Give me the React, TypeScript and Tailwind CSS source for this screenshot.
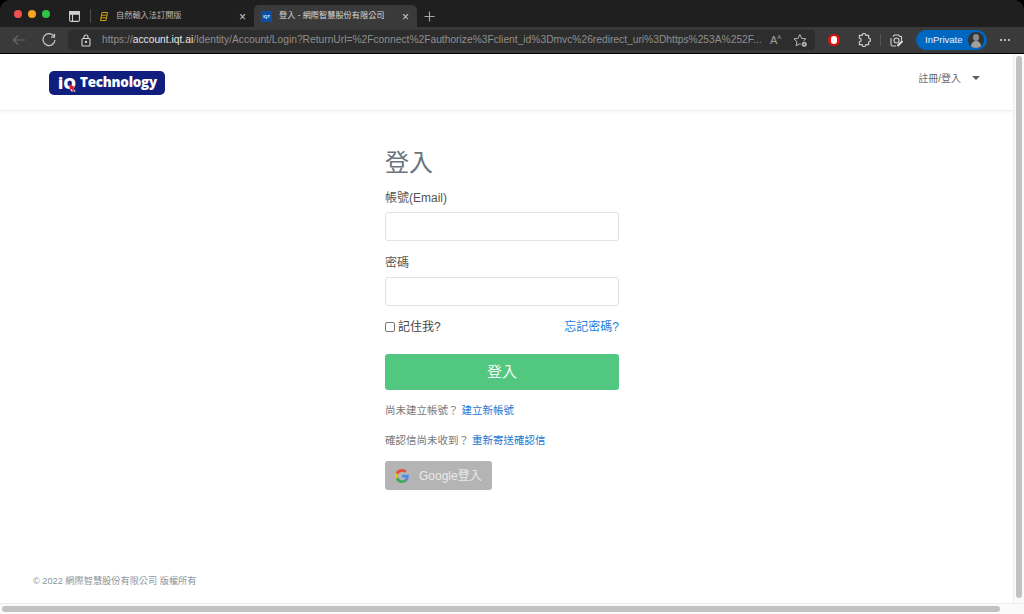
import React from "react";

const cjk = { fontFamily: '"Liberation Sans","Noto Sans CJK TC",sans-serif' };

function GoogleIcon() {
  return (
    <svg width="14" height="14" viewBox="0 0 48 48" className="shrink-0 opacity-90">
      <path fill="#EA4335" d="M24 9.500c3.500 0 6.700 1.200 9.200 3.600l6.900-6.900C35.900 2.400 30.500 0 24 0 14.600 0 6.500 5.400 2.600 13.200l8 6.200C12.500 13.700 17.800 9.500 24 9.500z" />
      <path fill="#4285F4" d="M47 24.500c0-1.600-.1-3.100-.4-4.500H24v9h12.900c-.6 3-2.200 5.500-4.800 7.200l7.700 6C44.300 38.500 47 32.100 47 24.500z" />
      <path fill="#FBBC05" d="M10.600 28.600c-.5-1.400-.8-3-.8-4.600s.3-3.200.8-4.600l-8-6.200C.9 16.500 0 20.100 0 24s.9 7.500 2.600 10.800l8-6.200z" />
      <path fill="#34A853" d="M24 48c6.500 0 11.900-2.100 15.800-5.800l-7.700-6c-2.100 1.400-4.900 2.300-8.100 2.300-6.200 0-11.500-4.200-13.400-9.900l-8 6.200C6.500 42.600 14.600 48 24 48z" />
    </svg>
  );
}

function Toolbar() {
  return (
    <div className="flex h-[26px] items-center bg-[#3a3a3a] pl-[12px] pr-[13px]" style={cjk}>
      <svg width="14" height="14" viewBox="0 0 14 14" fill="none" stroke="#686868" strokeWidth="1.200" className="mr-[16px] shrink-0">
        <path d="M13 7H1.500M6 2.500 1.500 7 6 11.500" />
      </svg>
      <svg width="14" height="14" viewBox="0 0 14 14" fill="none" stroke="#c8c8c8" strokeWidth="1.200" className="mr-[12px] shrink-0">
        <path d="M12 3.200A6 6 0 1 0 13 7" />
        <path d="M12.500.8v3.400H9" />
      </svg>
      <div className="flex h-[20px] w-[747px] shrink-0 items-center rounded-[4px] bg-[#2d2d2d] pl-[12px] pr-[8px]">
        <svg width="12" height="13" viewBox="0 0 12 13" fill="none" stroke="#d4d4d4" strokeWidth="1.100" className="mr-[10px] shrink-0">
          <rect x="2" y="4.500" width="8" height="7.500" rx="1" />
          <path d="M4 4.500V3a2 2 0 0 1 4 0v1.500" />
          <circle cx="6" cy="8" r=".6" fill="#d4d4d4" />
        </svg>
        <div className="w-[668px] shrink-0 whitespace-nowrap text-[10.250px] text-[#8f8f8f]">
          https://<span className="text-[#e6e6e6]">account.iqt.ai</span>/Identity/Account/Login?ReturnUrl=%2Fconnect%2Fauthorize%3Fclient_id%3Dmvc%26redirect_uri%3Dhttps%253A%252F...
        </div>
        <div className="flex items-start text-[#a0a0a0]">
          <span className="text-[11px] leading-[12px]">A</span>
          <span className="text-[6px] leading-[7px]">A</span>
        </div>
        <svg width="15" height="15" viewBox="0 0 24 24" fill="none" stroke="#b8b8b8" strokeWidth="1.600" strokeLinejoin="round" className="ml-[12px] shrink-0">
          <path d="M11 2.500 13.900 8.600 20.500 9.400 15.700 13.900 17 20.400 11 17.200 5 20.400 6.300 13.900 1.500 9.400 8.100 8.600z" />
          <circle cx="18" cy="18" r="5.500" fill="#2d2d2d" stroke="none" />
          <circle cx="18" cy="18" r="4" fill="#b8b8b8" stroke="none" />
          <circle cx="18" cy="18" r="1.300" fill="#2d2d2d" stroke="none" />
        </svg>
      </div>
      <div className="ml-[13px] flex h-[12px] w-[12px] shrink-0 items-center justify-center rounded-full bg-[#e01010]">
        <div className="h-[8px] w-[6px] rounded-[3px] bg-white" />
      </div>
      <svg width="14" height="14" viewBox="0 0 15 15" fill="none" stroke="#d0d0d0" strokeWidth="1.200" className="ml-[17px] shrink-0">
        <path d="M5.500 2.500a2 2 0 0 1 4 0h3v3a2 2 0 0 1 0 4v3h-3a2 2 0 0 1-4 0h-3v-3a2 2 0 0 0 0-4v-3z" />
      </svg>
      <div className="ml-[9px] h-[12px] w-px shrink-0 bg-[#555555]" />
      <svg width="15" height="15" viewBox="0 0 15 15" fill="none" stroke="#d0d0d0" strokeWidth="1.100" className="ml-[8px] shrink-0">
        <path d="M4 3.500 5.500 2h4L11 3.500h1.500v4M2 5v6.500A1.500 1.500 0 0 0 3.500 13H7" />
        <circle cx="7.500" cy="7.500" r="2.500" />
        <path d="m8.500 13 5-5" strokeWidth="1.800" stroke="#e8e8e8" />
      </svg>
      <div className="ml-[12px] flex h-[20px] w-[71px] shrink-0 items-center rounded-full bg-[#0067c0] pl-[9px] pr-[3px]">
        <span className="flex-1 whitespace-nowrap text-[9.500px] text-[#e8f2fb]">InPrivate</span>
        <div className="relative h-[16px] w-[16px] overflow-hidden rounded-full bg-[#333333]">
          <div className="absolute left-[5px] top-[2px] h-[7px] w-[6px] rounded-full bg-[#8a8a8a]" />
          <div className="absolute left-[3px] top-[9px] h-[8px] w-[10px] rounded-t-full bg-[#a0a0a0]" />
        </div>
      </div>
      <div className="ml-[13px] flex gap-[2px]">
        <div className="h-[2px] w-[2px] rounded-full bg-[#e0e0e0]" />
        <div className="h-[2px] w-[2px] rounded-full bg-[#e0e0e0]" />
        <div className="h-[2px] w-[2px] rounded-full bg-[#e0e0e0]" />
      </div>
    </div>
  );
}

function TabBar() {
  return (
    <div className="flex h-[27px] items-end rounded-t-[10px] bg-[#1f1f1f]">
      <div className="flex h-[27px] items-center gap-[6px] pl-[14px]">
        <div className="h-[8px] w-[8px] rounded-full bg-[#f0524f]" />
        <div className="h-[8px] w-[8px] rounded-full bg-[#f5a623]" />
        <div className="h-[8px] w-[8px] rounded-full bg-[#2dc248]" />
      </div>
      <div className="flex h-[27px] items-center pl-[19px] pt-[5px]">
        <svg width="11" height="11" viewBox="0 0 11 11" fill="none" stroke="#cfcfcf" strokeWidth="1.100">
          <rect x=".6" y=".6" width="9.800" height="9.800" rx="1.500" />
          <path d="M3.500 3.200v7" />
          <rect x=".6" y=".6" width="9.800" height="2.600" fill="#cfcfcf" />
        </svg>
        <div className="ml-[10px] h-[14px] w-px bg-[#4c4c4c]" />
      </div>
      <div className="flex h-[27px] w-[163px] items-center pl-[9px] pr-[8px] pt-[6px] text-[#b9b9b9]" style={cjk}>
        <svg width="8" height="9" viewBox="0 0 8 9" fill="none" stroke="#c9a015" strokeWidth="1" className="shrink-0">
          <path d="M2 .5h5.500L6 8.500H.5zM1.500 3.200h5.300M1 5.800h5.300" />
        </svg>
        <span className="ml-[8px] flex-1 whitespace-nowrap text-[8.200px]">自然輸入法訂閱版</span>
        <span className="text-[12px] leading-none text-[#c8c8c8]">×</span>
      </div>
      <div className="flex h-[22px] w-[163px] items-center rounded-t-[5px] bg-[#3a3a3a] pl-[7px] pr-[8px] pt-[1px] text-[#d8d8d8]" style={cjk}>
        <div className="flex h-[11px] w-[11px] shrink-0 items-center justify-center bg-[#0b4ea2] text-[4px] font-bold text-white">IQT</div>
        <span className="ml-[7px] flex-1 whitespace-nowrap text-[8.200px]">登入 - 網際智慧股份有限公司</span>
        <span className="text-[12px] leading-none text-[#d0d0d0]">×</span>
      </div>
      <div className="flex h-[27px] items-center pl-[7px] pt-[5px]">
        <svg width="11" height="11" viewBox="0 0 11 11" stroke="#a8a8a8" strokeWidth="1.100">
          <path d="M5.500.5v10M.5 5.500h10" />
        </svg>
      </div>
    </div>
  );
}

function NavBar() {
  return (
    <div className="flex h-[57px] shrink-0 items-start justify-between border-b border-[#efefef] pl-[49px] pr-[33px] pt-[17px] shadow-[0_1px_3px_rgba(0,0,0,0.05)]">
      <div
        className="relative flex h-[24px] w-[116px] items-center rounded-[5px] bg-[#101f7d] pl-[9px] font-extrabold text-white"
        style={{ fontFamily: '"Open Sans",sans-serif' }}
      >
        <span className="mr-[4px] text-[16px] leading-none">iQ</span>
        <span className="text-[13.400px] leading-none tracking-[-0.2px]">Technology</span>
        <svg width="6" height="8" viewBox="0 0 6 8" className="absolute left-[20px] top-[13px]">
          <path d="M0 0 6 3 4 4 5.500 8 4 8 2.500 5 1 6z" fill="#d9202c" />
        </svg>
      </div>
      <div className="flex items-center pt-[1px] text-[#6a6a6a]" style={cjk}>
        <span className="text-[10px] leading-[14px]">註冊/登入</span>
        <div className="mb-[2px] ml-[11px] h-0 w-0 border-x-[4px] border-t-[4px] border-x-transparent border-t-[#5f5f5f]" />
      </div>
    </div>
  );
}

function LoginForm() {
  return (
    <div className="ml-[385px] w-[234px]" style={cjk}>
      <h1 className="mt-[37px] text-[24px] font-normal leading-[30px] text-[#6c757d]">登入</h1>
      <label className="mt-[11px] block text-[12px] leading-[18px] text-[#555555]">帳號(Email)</label>
      <input className="mt-[5px] block h-[29px] w-full rounded-[3px] border border-[#dfe2e6] bg-white" />
      <label className="mt-[13px] block text-[12px] leading-[18px] text-[#555555]">密碼</label>
      <input className="mt-[5px] block h-[29px] w-full rounded-[3px] border border-[#dfe2e6] bg-white" />
      <div className="mt-[12px] flex h-[18px] items-center justify-between">
        <div className="flex items-center">
          <div className="h-[10px] w-[10px] rounded-[2px] border border-[#767676] bg-white" />
          <span className="ml-[3px] text-[12px] text-[#444444]">記住我?</span>
        </div>
        <a className="text-[12px] text-[#1e7fe0]">忘記密碼?</a>
      </div>
      <button className="mt-[18px] block h-[36px] w-full rounded-[3px] bg-[#51c77f] text-[15px] text-[#f1faf4]">登入</button>
      <p className="mt-[13px] text-[10.500px] leading-[15px] text-[#787878]">
        尚未建立帳號？ <a className="text-[#1b76d2]">建立新帳號</a>
      </p>
      <p className="mt-[15px] text-[10.500px] leading-[15px] text-[#787878]">
        確認信尚未收到？ <a className="text-[#1b76d2]">重新寄送確認信</a>
      </p>
      <button className="mt-[13px] flex h-[29px] w-[107px] items-center rounded-[3px] bg-[#b4b4b4] pl-[10px] text-[12px] text-[#e9e9e9]">
        <GoogleIcon />
        <span className="ml-[10px]">Google登入</span>
      </button>
    </div>
  );
}

export default function App() {
  return (
    <div className="flex h-[614px] w-[1024px] flex-col overflow-hidden bg-black">
      <TabBar />
      <Toolbar />
      <div className="mt-px flex min-h-0 flex-1 flex-col bg-white">
        <div className="flex min-h-0 flex-1">
          <div className="flex min-w-0 flex-1 flex-col">
            <NavBar />
            <div className="flex flex-1 flex-col justify-between">
              <LoginForm />
              <p className="mb-[15px] pl-[33px] text-[9.200px] leading-[14px] text-[#8a96a0]" style={cjk}>
                © 2022 網際智慧股份有限公司 版權所有
              </p>
            </div>
          </div>
          <div className="flex w-[11px] shrink-0 justify-center border-l border-[#eeeeee] bg-[#fafafa] pt-[2px]">
            <div className="h-[542px] w-[6px] rounded-full bg-[#c2c2c2]" />
          </div>
        </div>
        <div className="flex h-[11px] shrink-0 items-center border-t border-[#eeeeee] bg-[#fafafa] pl-[2px]">
          <div className="h-[6px] w-[998px] rounded-full bg-[#c2c2c2]" />
        </div>
      </div>
    </div>
  );
}
